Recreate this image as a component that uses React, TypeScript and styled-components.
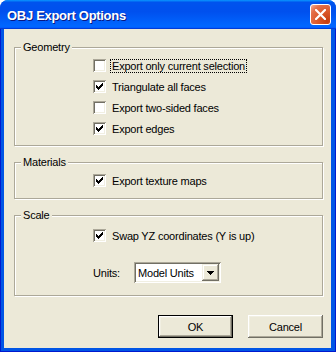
import React from 'react';
import styled, { createGlobalStyle } from 'styled-components';

const GlobalStyle = createGlobalStyle`
  html, body {
    margin: 0;
    padding: 0;
    background: #fff;
  }
  body {
    font-family: "Liberation Sans", Arial, sans-serif;
    font-size: 11px;
    color: #000;
  }
`;

const Window = styled.div`
  width: 336px;
  height: 352px;
  display: flex;
  flex-direction: column;
  background: #0055e5;
  border-radius: 8px 8px 0 0;
  overflow: hidden;
`;

const TitleBar = styled.div`
  height: 29px;
  flex: none;
  display: flex;
  align-items: center;
  justify-content: space-between;
  padding: 0 5px 0 7px;
  background: linear-gradient(
    180deg,
    #0997ff,
    #0053ee 8%,
    #0050ee 40%,
    #0066ff 88%,
    #0066ff 93%,
    #005bff 95%,
    #003dd7 96%,
    #003dd7
  );
`;

const Title = styled.span`
  color: #fff;
  font-weight: bold;
  font-size: 13px;
  letter-spacing: -0.3px;
  text-shadow: 1px 1px #0a1883;
  padding-top: 1px;
`;

const CloseButton = styled.button`
  width: 21px;
  height: 21px;
  padding: 0;
  box-sizing: border-box;
  border: 1px solid #fff;
  border-radius: 3px;
  background: radial-gradient(circle at 85% 85%, #c53d10 0%, #dc5a2c 45%, #e4704a 75%, #f3b29b 100%);
  display: flex;
  align-items: center;
  justify-content: center;
`;

const Frame = styled.div`
  flex: 1;
  display: flex;
  padding: 0 5px 4px 4px;
  box-shadow: inset 1px 0 #0019cf, inset -1px 0 #0019cf, inset 0 -1px #0019cf;
`;

const Client = styled.div`
  flex: 1;
  display: flex;
  flex-direction: column;
  gap: 10px;
  padding: 12px 8px 10px 10px;
  background: #ece9d8;
`;

const Group = styled.fieldset<{ $padTop: number; $padBottom: number }>`
  margin: 0;
  min-width: 0;
  padding: ${p => p.$padTop}px 6px ${p => p.$padBottom}px 6px;
  border: 1px solid #aca899;
  box-shadow: inset 1px 1px 0 #fff, 1px 1px 0 #fff;
`;

const Legend = styled.legend`
  padding: 0 2px;
  line-height: 13px;
  height: 13px;
  background: #ece9d8;
  letter-spacing: -0.2px;
`;

const GroupBody = styled.div`
  display: flex;
  flex-direction: column;
  padding-left: 72px;
`;

const CheckRow = styled.div`
  height: 21px;
  display: flex;
  align-items: center;
`;

const Box = styled.span`
  width: 13px;
  height: 13px;
  flex: none;
  box-sizing: border-box;
  background: #fff;
  display: flex;
  align-items: center;
  justify-content: center;
  box-shadow: inset 1px 1px 0 #aca899, inset -1px -1px 0 #fff, inset 2px 2px 0 #716f64,
    inset -2px -2px 0 #f1efe2;
`;

const CheckLabel = styled.span<{ $focused?: boolean }>`
  margin-left: 4px;
  padding: 0 1px;
  line-height: 12px;
  border: 1px dotted ${p => (p.$focused ? '#000' : 'transparent')};
  letter-spacing: -0.2px;
  white-space: nowrap;
`;

const UnitsRow = styled.div`
  margin-top: 16px;
  height: 21px;
  display: flex;
  align-items: center;
`;

const UnitsLabel = styled.span`
  width: 41px;
  letter-spacing: -0.2px;
`;

const ComboBox = styled.div`
  width: 87px;
  height: 21px;
  box-sizing: border-box;
  padding: 2px;
  background: #fff;
  display: flex;
  align-items: center;
  box-shadow: inset 1px 1px 0 #aca899, inset -1px -1px 0 #fff, inset 2px 2px 0 #716f64,
    inset -2px -2px 0 #f1efe2;
`;

const ComboText = styled.span`
  flex: 1;
  padding-left: 2px;
  letter-spacing: -0.2px;
  white-space: nowrap;
`;

const DropButton = styled.span`
  width: 17px;
  height: 17px;
  flex: none;
  box-sizing: border-box;
  background: #ece9d8;
  display: flex;
  align-items: center;
  justify-content: center;
  box-shadow: inset -1px -1px 0 #716f64, inset 1px 1px 0 #f1efe2, inset -2px -2px 0 #aca899,
    inset 2px 2px 0 #fff;
`;

const ButtonRow = styled.div`
  margin-top: auto;
  display: flex;
  justify-content: flex-end;
  gap: 15px;
`;

const Button = styled.button<{ $default?: boolean }>`
  width: 75px;
  height: 23px;
  box-sizing: border-box;
  padding: 0;
  font-family: "Liberation Sans", Arial, sans-serif;
  font-size: 11px;
  letter-spacing: -0.2px;
  color: #000;
  background: #ece9d8;
  border: ${p => (p.$default ? '1px solid #000' : 'none')};
  box-shadow: inset -1px -1px 0 #716f64, inset 1px 1px 0 #fff, inset -2px -2px 0 #aca899,
    inset 2px 2px 0 #f1efe2;
`;

const Check = () => (
  <svg width="7" height="7" viewBox="0 0 7 7" shapeRendering="crispEdges">
    <path
      d="M6 0h1v1H6zM5 1h2v1H5zM0 2h1v1H0zM4 2h3v1H4zM0 3h2v1H0zM3 3h3v1H3zM0 4h5v1H0zM1 5h3v1H1zM2 6h1v1H2z"
      fill="#000"
    />
  </svg>
);

interface CheckItemProps {
  label: string;
  checked?: boolean;
  focused?: boolean;
}

const CheckItem: React.FC<CheckItemProps> = ({ label, checked, focused }) => (
  <CheckRow>
    <Box>{checked && <Check />}</Box>
    <CheckLabel $focused={focused}>{label}</CheckLabel>
  </CheckRow>
);

const App: React.FC = () => {
  return (
    <>
      <GlobalStyle />
      <Window>
        <TitleBar>
          <Title>OBJ Export Options</Title>
          <CloseButton aria-label="Close">
            <svg width="11" height="11" viewBox="0 0 11 11">
              <path d="M1 1L10 10M10 1L1 10" stroke="#fff" strokeWidth="2.2" strokeLinecap="square" />
            </svg>
          </CloseButton>
        </TitleBar>
        <Frame>
          <Client>
            <Group $padTop={1} $padBottom={6}>
              <Legend>Geometry</Legend>
              <GroupBody>
                <CheckItem label="Export only current selection" focused />
                <CheckItem label="Triangulate all faces" checked />
                <CheckItem label="Export two-sided faces" />
                <CheckItem label="Export edges" checked />
              </GroupBody>
            </Group>
            <Group $padTop={1} $padBottom={7}>
              <Legend>Materials</Legend>
              <GroupBody>
                <CheckItem label="Export texture maps" checked />
              </GroupBody>
            </Group>
            <Group $padTop={3} $padBottom={12}>
              <Legend>Scale</Legend>
              <GroupBody>
                <CheckItem label="Swap YZ coordinates (Y is up)" checked />
                <UnitsRow>
                  <UnitsLabel>Units:</UnitsLabel>
                  <ComboBox>
                    <ComboText>Model Units</ComboText>
                    <DropButton>
                      <svg width="7" height="4" viewBox="0 0 7 4" shapeRendering="crispEdges">
                        <path d="M0 0h7v1H0zM1 1h5v1H1zM2 2h3v1H2zM3 3h1v1H3z" fill="#000" />
                      </svg>
                    </DropButton>
                  </ComboBox>
                </UnitsRow>
              </GroupBody>
            </Group>
            <ButtonRow>
              <Button $default>OK</Button>
              <Button>Cancel</Button>
            </ButtonRow>
          </Client>
        </Frame>
      </Window>
    </>
  );
};

export default App;
